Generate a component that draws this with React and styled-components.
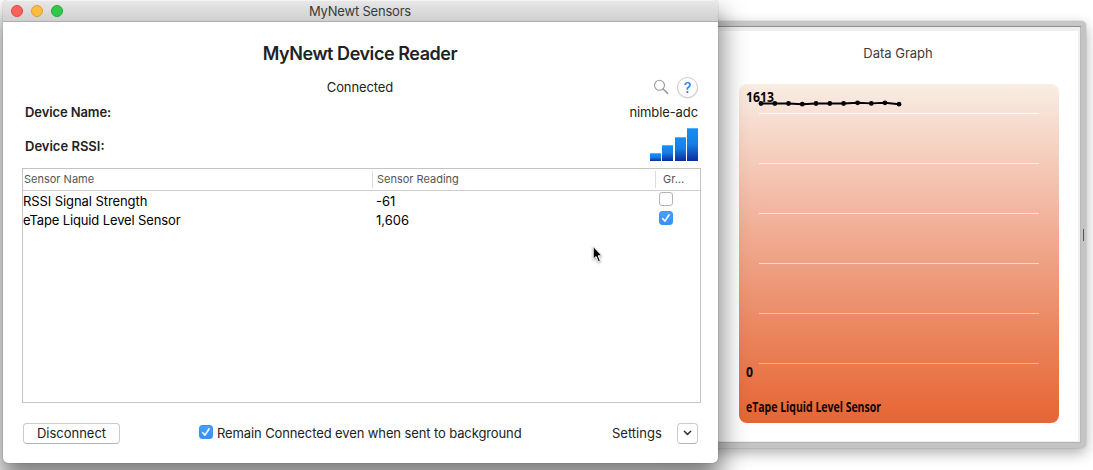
import React from "react";
import styled, { createGlobalStyle } from "styled-components";

const Global = createGlobalStyle`
  * { box-sizing: border-box; }
  html, body { margin: 0; padding: 0; background: #fff; overflow: hidden; }
`;

const Desktop = styled.div`
  position: relative;
  width: 1093px;
  height: 470px;
  overflow: hidden;
  background: #fff;
  font-family: Inter, "Liberation Sans", sans-serif;
  font-size: 13px;
  color: #222;
`;

const Text = styled.span`
  display: block;
  white-space: nowrap;
  font-size: ${(p) => p.$size || 13}px;
  font-weight: ${(p) => p.$weight || 400};
  letter-spacing: ${(p) => p.$track || 0}px;
  color: ${(p) => p.$color || "#222"};
  line-height: 18px;
`;

const MainWindow = styled.section`
  position: absolute;
  left: 3px;
  top: 0;
  width: 715px;
  height: 463px;
  display: flex;
  flex-direction: column;
  background: #fff;
  border-radius: 5px;
  box-shadow: 0 0 1px rgba(0, 0, 0, 0.6), 0 16px 26px 3px rgba(0, 0, 0, 0.5);
`;

const TitleBar = styled.header`
  display: grid;
  grid-template-columns: 1fr auto 1fr;
  align-items: center;
  height: 22px;
  padding: 0 9px 0 8px;
  border-radius: 5px 5px 0 0;
  border-top: 1px solid #f3f3f3;
  border-bottom: 1px solid #adadad;
  background: linear-gradient(#e7e7e7, #cfcfcf);
`;

const Lights = styled.div`
  display: flex;
  gap: 8px;
`;

const Light = styled.i`
  width: 12px;
  height: 12px;
  border-radius: 50%;
  background: ${(p) => p.$fill};
  border: 1px solid ${(p) => p.$edge};
`;

const Body = styled.div`
  flex: 1;
  display: flex;
  flex-direction: column;
  padding: 20px 17px 0 19px;
`;

const Heading = styled.div`
  display: flex;
  justify-content: center;
  align-items: center;
  height: 24px;
  padding-right: 3px;
`;

const StatusRow = styled.div`
  display: grid;
  grid-template-columns: 1fr auto 1fr;
  align-items: center;
  height: 22px;
  margin-top: 10px;
  padding-right: 3px;
`;

const IconGroup = styled.div`
  display: flex;
  justify-content: flex-end;
  align-items: center;
  gap: 8px;
`;

const HelpButton = styled.button`
  width: 21px;
  height: 21px;
  padding: 0;
  border-radius: 50%;
  border: 1px solid #c9c9c9;
  background: #fff;
  box-shadow: 0 1px 0 rgba(0, 0, 0, 0.08);
  color: #1a82fb;
  font: 500 14.5px/19px Inter, sans-serif;
`;

const InfoRow = styled.div`
  display: flex;
  justify-content: space-between;
  align-items: flex-start;
  height: ${(p) => p.$height}px;
  margin-top: ${(p) => p.$gap}px;
  padding: 0 3px;
`;

const SignalLabel = styled.div`
  padding-top: 9px;
`;

const SignalBars = styled.div`
  display: flex;
  align-items: flex-end;
  gap: 1.4px;
  height: 33px;
`;

const SignalBar = styled.i`
  width: 11px;
  height: ${(p) => p.$height}px;
  background: linear-gradient(#178cf2 0, #1680e6 45%, #0a2ca0 100%);
  border-top: 1px solid #58aef5;
`;

const Table = styled.div`
  height: 235px;
  margin-top: 6px;
  border: 1px solid #c4c4c4;
  background: #fff;
`;

const TableHead = styled.div`
  display: grid;
  grid-template-columns: 349px 283px 1fr;
  align-items: center;
  height: 22px;
  padding-bottom: 1px;
  border-bottom: 1px solid #cdcdcd;
`;

const HeadCell = styled.div`
  display: flex;
  align-items: center;
  height: 17px;
  padding-left: ${(p) => p.$pad}px;
  border-left: 1px solid ${(p) => (p.$first ? "transparent" : "#dcdcdc")};
`;

const TableRow = styled.div`
  display: grid;
  grid-template-columns: 353px 283px 1fr;
  height: 19px;
  padding-top: 1px;
`;

const CheckBox = styled.span`
  display: flex;
  flex: none;
  width: 14px;
  height: 14px;
  margin-top: ${(p) => p.$lift || 0}px;
  border-radius: 3px;
  border: 1px solid ${(p) => (p.$on ? "#3d93f5" : "#b3b3b3")};
  background: ${(p) => (p.$on ? "linear-gradient(#489ffc, #3590f8)" : "#fff")};
  svg { margin: -1px; }
`;

const Footer = styled.footer`
  display: flex;
  align-items: center;
  height: 21px;
  margin-top: 20px;
`;

const PushButton = styled.button`
  display: flex;
  justify-content: center;
  align-items: center;
  width: ${(p) => p.$width}px;
  height: 21px;
  margin-left: ${(p) => p.$left}px;
  padding: 0 0 1px;
  border: 1px solid #cbcbcb;
  border-bottom-color: #b5b5b5;
  border-radius: 4px;
  background: #fff;
  font-family: inherit;
`;

const Option = styled.label`
  display: flex;
  align-items: center;
  gap: 4px;
  width: 413px;
  margin-left: 79px;
`;

const FooterText = styled(Text)`
  padding-bottom: 1px;
`;

const Cursor = styled.svg`
  position: absolute;
  left: 590px;
  top: 244px;
  filter: drop-shadow(0 1px 1px rgba(0, 0, 0, 0.35));
`;

const GraphWindow = styled.section`
  position: absolute;
  left: 660px;
  top: 21px;
  width: 426px;
  height: 427px;
  display: flex;
  border: 5px solid #c4c4c4;
  border-top-color: #c6c6c6;
  border-radius: 5px;
  box-shadow: inset 0 1px 0 #8e8e8e, inset 0 -1px 0 #b4b4b4, inset -1px 0 0 #b8b8b8, 0 0 1px rgba(0, 0, 0, 0.6), 0 5px 14px rgba(0, 0, 0, 0.32);
`;

const GraphPane = styled.div`
  flex: 1;
  display: flex;
  flex-direction: column;
  margin: 1px 1px 1px 0;
  padding: 13px 19px 0 74px;
  border: solid #efefef;
  border-width: 4px 2px 1px 0;
  background: #fff;
`;

const GraphTitle = styled.div`
  display: flex;
  justify-content: center;
  height: 40px;
  padding-right: 2px;
`;

const Chart = styled.div`
  width: 320px;
  height: 339px;
  border-radius: 8px;
  background: linear-gradient(#f9ede4 0, #f7d8cb 14%, #f1af97 42%, #ea835b 75%, #e66534 100%);
  svg { display: block; }
`;

const Resize = styled.i`
  position: absolute;
  left: 1083px;
  top: 229px;
  width: 1px;
  height: 12px;
  background: #555;
`;

const Check = () => (
  <svg width="14" height="14" viewBox="0 0 14 14" fill="none" stroke="#fff" strokeWidth="1.6" strokeLinecap="round" strokeLinejoin="round">
    <path d="M3.8 7.7 L6 10.1 L10.1 3.8" />
  </svg>
);

const POINTS = [[22, 19.5], [35.8, 19.5], [49.5, 19.5], [63.3, 20.2], [77, 19.5], [90.8, 19.5], [104.6, 19.5], [118.6, 18.8], [132.3, 19.4], [146, 18.8], [160, 20.2]];
const GRID = [[29, 0.85], [79, 0.65], [129, 0.65], [179, 0.6], [229, 0.5], [279, 0.4]];

const LABEL = { fontFamily: "Open Sans", fontWeight: 700, fontSize: 14, fill: "#0d0503" };

export default function App() {
  return (
    <Desktop>
      <Global />
      <GraphWindow>
        <GraphPane>
          <GraphTitle><Text $color="#3c3c3c">Data Graph</Text></GraphTitle>
          <Chart>
            <svg width="320" height="339" viewBox="0 0 320 339">
              {GRID.map(([y, o]) => (
                <rect key={y} x="20" y={y} width="280" height="1" fill="#fff" opacity={o} />
              ))}
              <text x="7" y="18" textLength="28" lengthAdjust="spacingAndGlyphs" {...LABEL}>1613</text>
              <text x="7" y="293" textLength="7" lengthAdjust="spacingAndGlyphs" {...LABEL}>0</text>
              <text x="7" y="328" textLength="135" lengthAdjust="spacingAndGlyphs" {...LABEL}>eTape Liquid Level Sensor</text>
              <polyline points={POINTS.map((p) => p.join(",")).join(" ")} fill="none" stroke="#000" strokeWidth="1.9" />
              {POINTS.map(([x, y]) => <circle key={x} cx={x} cy={y} r="2.4" />)}
            </svg>
          </Chart>
        </GraphPane>
      </GraphWindow>
      <Resize />
      <MainWindow>
        <TitleBar>
          <Lights>
            <Light $fill="#fc605c" $edge="#df4744" />
            <Light $fill="#fdbc40" $edge="#dd9f36" />
            <Light $fill="#34c84a" $edge="#27a834" />
          </Lights>
          <Text $track={-0.2} $color="#3a3a3a">MyNewt Sensors</Text>
          <span />
        </TitleBar>
        <Body>
          <Heading><Text $size={18} $weight={600} $track={-0.45}>MyNewt Device Reader</Text></Heading>
          <StatusRow>
            <span />
            <Text $track={-0.1}>Connected</Text>
            <IconGroup>
              <svg width="16" height="16" viewBox="0 0 16 16" fill="none" stroke="#989898" strokeWidth="1.1" strokeLinecap="round">
                <circle cx="6.5" cy="6.3" r="5" />
                <path d="M10.2 10 L14.6 14.4" strokeWidth="1.5" />
              </svg>
              <HelpButton>?</HelpButton>
            </IconGroup>
          </StatusRow>
          <InfoRow $height={18} $gap={5}>
            <Text $weight={600} $track={-0.1}>Device Name:</Text>
            <Text $track={-0.1}>nimble-adc</Text>
          </InfoRow>
          <InfoRow $height={34} $gap={7}>
            <SignalLabel><Text $weight={600}>Device RSSI:</Text></SignalLabel>
            <SignalBars>
              {[8, 16, 24, 33].map((h) => <SignalBar key={h} $height={h} />)}
            </SignalBars>
          </InfoRow>
          <Table>
            <TableHead>
              <HeadCell $first $pad={0}><Text $size={11} $color="#555">Sensor Name</Text></HeadCell>
              <HeadCell $pad={4}><Text $size={11} $color="#555">Sensor Reading</Text></HeadCell>
              <HeadCell $pad={7}><Text $size={11} $color="#555">Gr…</Text></HeadCell>
            </TableHead>
            <TableRow>
              <Text $track={-0.08} $color="#000">RSSI Signal Strength</Text>
              <Text $color="#000">-61</Text>
              <CheckBox />
            </TableRow>
            <TableRow>
              <Text $track={-0.13} $color="#000">eTape Liquid Level Sensor</Text>
              <Text $color="#000">1,606</Text>
              <CheckBox $on><Check /></CheckBox>
            </TableRow>
          </Table>
          <Footer>
            <PushButton $width={97} $left={1}><Text>Disconnect</Text></PushButton>
            <Option>
              <CheckBox $on $lift={-3}><Check /></CheckBox>
              <FooterText $track={-0.11}>Remain Connected even when sent to background</FooterText>
            </Option>
            <FooterText>Settings</FooterText>
            <PushButton $width={21} $left={15}>
              <svg width="9" height="6" viewBox="0 0 9 6" fill="none" stroke="#333" strokeWidth="1.5" strokeLinecap="round" strokeLinejoin="round">
                <path d="M1.3 1.2 L4.5 4.4 L7.7 1.2" />
              </svg>
            </PushButton>
          </Footer>
        </Body>
      </MainWindow>
      <Cursor width="16" height="22" viewBox="0 0 16 22">
        <path d="M3.2 2.4 L3.2 15.2 L6.1 12.5 L8.3 17.8 L10.4 16.9 L8.2 11.8 L12 11.8 Z" fill="#000" stroke="#fff" strokeWidth="1" />
      </Cursor>
    </Desktop>
  );
}
